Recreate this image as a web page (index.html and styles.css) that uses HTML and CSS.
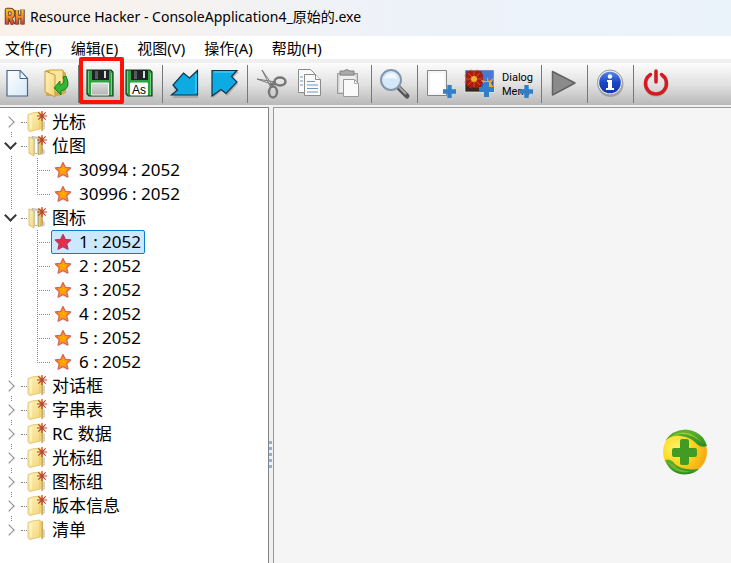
FILE: index.html
```html
<!DOCTYPE html>
<html lang="zh-CN">
<head>
<meta charset="utf-8">
<title>Resource Hacker</title>
<link rel="stylesheet" href="styles.css">
</head>
<body>
<svg class="defs" aria-hidden="true">
  <defs>
    <linearGradient id="gold" x1="0" x2="1" y2="1"><stop stop-color="#fff3b8"/><stop offset="1" stop-color="#f3d67e"/></linearGradient>
    <linearGradient id="goldDark" x1="0" x2="1"><stop stop-color="#f5dc83"/><stop offset="1" stop-color="#c9a04a"/></linearGradient>
    <linearGradient id="paper" x1="0" x2="1" y2="1"><stop stop-color="#fff"/><stop offset="1" stop-color="#d5e8f8"/></linearGradient>
    <linearGradient id="steel" x2="0" y2="1"><stop stop-color="#dedede"/><stop offset="1" stop-color="#b4b4b4"/></linearGradient>
    <linearGradient id="blue" x2="0" y2="1"><stop stop-color="#5b86ea"/><stop offset=".5" stop-color="#1747c4"/><stop offset="1" stop-color="#1238a5"/></linearGradient>
    <linearGradient id="rh" x2="0" y2="1"><stop stop-color="#ffbd22"/><stop offset=".5" stop-color="#f38a2b"/><stop offset="1" stop-color="#d73226"/></linearGradient>
    <linearGradient id="leaf" x2="0" y2="1"><stop stop-color="#64b52e"/><stop offset="1" stop-color="#2b8a20"/></linearGradient>
    <radialGradient id="ball" cx=".3" cy=".4" r=".7"><stop stop-color="#fff36a"/><stop offset=".5" stop-color="#ffd91f"/><stop offset="1" stop-color="#f6aa14"/></radialGradient>
    <radialGradient id="orange"><stop stop-color="#ffb000"/><stop offset="1" stop-color="#ff8a12"/></radialGradient>
    <symbol id="spark" viewBox="0 0 10 10"><path d="M5 0v10M0 5h10M1.3 1.3l7.4 7.4M8.7 1.3L1.3 8.7" stroke="#b8442f" stroke-width="1.200"/></symbol>
    <symbol id="folder" viewBox="0 0 20 22">
      <path d="M14 8l4 3v7l-4 3z" fill="#b7b7b0" opacity=".6"/>
      <path d="M1 3.500Q5 1.500 13 1v17L3 20.500Q1 20 1 18z" fill="url(#gold)" stroke="#dfbd63" stroke-width=".8"/>
      <path d="M13 1.500l3 1V20l-3-2z" fill="url(#goldDark)"/>
      <path d="M4 4.500v13" stroke="#fffbe0"/>
    </symbol>
    <symbol id="folder-open" viewBox="0 0 20 22">
      <path d="M14 12l4 3v4l-5 1z" fill="#bbb" opacity=".6"/>
      <path d="M5 1.500l7 1V19l-7-1z" fill="#ccd6d9" stroke="#9a9a84" stroke-width=".6"/>
      <path d="M2 2l5 2v17l-5-3z" fill="url(#gold)" stroke="#d6b052" stroke-width=".8"/>
      <path d="M11.500 2h4v16L11.500 20z" fill="url(#goldDark)" stroke="#b08d42" stroke-width=".5"/>
      <path d="M9 4v14" stroke="#f5fbff" stroke-width="2"/>
    </symbol>
    <symbol id="star" viewBox="0 0 18 18"><path d="M9 1.500l2.300 4.900 5.400.6-4 3.700 1.200 5.500L9 13.600l-4.900 2.600 1.200-5.500-4-3.700 5.400-.6z" fill="url(#orange)" stroke="#dc6658" stroke-width="1.300" stroke-linejoin="round"/></symbol>
    <symbol id="star-red" viewBox="0 0 18 18"><path d="M9 1.500l2.300 4.900 5.400.6-4 3.700 1.200 5.500L9 13.600l-4.900 2.600 1.200-5.500-4-3.700 5.400-.6z" fill="#e52c48" stroke="#b33d61" stroke-width="1.300" stroke-linejoin="round"/></symbol>
    <symbol id="plus" viewBox="0 0 12 12"><path d="M4 0h4v4h4v4H8v4H4V8H0V4h4z" fill="#2f80c8"/></symbol>
    <symbol id="disk" viewBox="0 0 34 34">
      <path d="M4 3h24l2 2v24H6l-2-2z" fill="#2fa344" stroke="#143f1d" stroke-width="1.200"/>
      <path d="M5.500 4v22M28.500 6v22" stroke="#6fd57a"/>
      <path d="M9 3h17v10H9z" fill="#1f2225"/>
      <path d="M12 4h3v8h-3z" fill="#555b60"/><path d="M21 4h2v7h-2z" fill="#d9dee2"/>
      <path d="M8.500 16h17v12h-17z" fill="url(#steel)" stroke="#f4f4f4"/>
    </symbol>
  </defs>
</svg>

<header class="titlebar">
  <svg class="app-icon" viewBox="0 0 22 20" aria-hidden="true">
    <g fill="none" stroke="#604535" stroke-width="4.500" stroke-linejoin="round"><path d="M3 17.500V3h3q3 0 3 3.500T6 10H3M6 10l3 7.500M13 3v14.500M18.500 2.500v15M13 10h5.500"/></g>
    <g fill="none" stroke="url(#rh)" stroke-width="2.500"><path d="M3 17.500V3h3q3 0 3 3.500T6 10H3M6 10l3 7.500M13 3v14.500M18.500 2.500v15M13 10h5.500"/></g>
  </svg>
  <h1 class="title">Resource Hacker - ConsoleApplication4_原始的.exe</h1>
</header>

<nav class="menubar">
  <button class="menu">文件(F)</button>
  <button class="menu">编辑(E)</button>
  <button class="menu">视图(V)</button>
  <button class="menu">操作(A)</button>
  <button class="menu">帮助(H)</button>
</nav>

<div class="toolbar" role="toolbar">
  <button class="tool" aria-label="New"><svg viewBox="0 0 34 34"><path d="M7 3.500h13l7.500 8V29H7z" fill="url(#paper)" stroke="#43688f" stroke-width="1.200"/><path d="M20 3.500v8h7.500z" fill="#eaf5ff" stroke="#43688f"/></svg></button>
  <button class="tool" aria-label="Open"><svg viewBox="0 0 34 34"><path d="M7 3h16l4 3v20l-7 3H7z" fill="#d3ac4a"/><path d="M10 3h14v22H10z" fill="#fae69a" stroke="#c8a146"/><path d="M6 4l10 4v22L6 25z" fill="url(#gold)" stroke="#c49b3f"/><path d="M27 9q6 13-5 15v4l-7-7 6-7v4q6-2 3-8z" fill="#36b533" stroke="#188123"/></svg></button>
  <span class="sep sep-tight"></span>
  <button class="tool" aria-label="Save"><svg viewBox="0 0 34 34"><use href="#disk"/></svg></button>
  <button class="tool" aria-label="Save As"><svg viewBox="0 0 34 34"><use href="#disk"/><path d="M8.500 16h17v12h-17z" fill="#fff"/><text class="as-label" x="10" y="27">As</text></svg></button>
  <span class="sep"></span>
  <button class="tool" aria-label="Import"><svg viewBox="0 0 34 34"><path d="M30 5v26H4l5-5-4-6L15 7l6 4z" fill="#888" opacity=".5"/><path d="M29.500 3.500V28H3.500l6-5L5 18 15.500 6l6 5z" fill="#0cabe3" stroke="#123244" stroke-width="1.200"/><path d="M28 7v19" stroke="#55d8ff"/></svg></button>
  <button class="tool" aria-label="Export"><svg viewBox="0 0 34 34"><path d="M6 5h26l-6 6 5 6-11 12-5-5-9 7z" fill="#888" opacity=".5"/><path d="M5 3.500h25l-5.500 6L30 15 19 26.500l-5-4L5 29z" fill="#0cabe3" stroke="#123244" stroke-width="1.200"/><path d="M7 5h20" stroke="#55d8ff"/></svg></button>
  <span class="sep"></span>
  <button class="tool" aria-label="Cut"><svg viewBox="0 0 34 34"><path d="M9 3l11 16-2 2zM4 12l18 3-1 3z" fill="#f5f5f5" stroke="#777"/><ellipse cx="27" cy="14.500" rx="5.500" ry="4" fill="none" stroke="#777" stroke-width="2.500"/><ellipse cx="20" cy="25" rx="4" ry="5.500" fill="none" stroke="#777" stroke-width="2.500"/><path d="M17 18l5-2" stroke="#777" stroke-width="3"/></svg></button>
  <button class="tool" aria-label="Copy"><svg viewBox="0 0 34 34"><g fill="#fafafa" stroke="#8b8b8b"><path d="M6.500 2.500h12l5 5v18h-17z"/><path d="M12.500 7.500h11l5 5v16h-16z"/><path d="M23.500 7.500v5h5"/></g><path d="M8 10h3M8 14h3M8 18h3M15 14.500h8M15 18h11M15 21.500h11M15 25h11" stroke="#7296b8"/></svg></button>
  <button class="tool" aria-label="Paste"><svg viewBox="0 0 34 34"><path d="M6.500 6.500h20v20h-20z" fill="#d3d3d3" stroke="#999"/><path d="M8.500 9h16v16h-16z" fill="#eee"/><path d="M9 7V4h4q2-3 6 0h4v4H9z" fill="#aaa" stroke="#828282"/><path d="M12.500 12.500h11l4 4v13h-15z" fill="#fafafa" stroke="#999"/><path d="M23.500 12.500v4h4" fill="none" stroke="#aaa"/></svg></button>
  <span class="sep"></span>
  <button class="tool" aria-label="Find"><svg viewBox="0 0 34 34"><path d="M22 21l8 8" stroke="#555" stroke-width="5" stroke-linecap="round"/><path d="M21 19l8 8" stroke="#aaa" stroke-width="2"/><circle cx="14" cy="13" r="10" fill="#d4e8fa" stroke="#8496ad" stroke-width="2"/><path d="M7 12q2-6 9-6 5 3 4 6-7-2-13 0z" fill="#fff" opacity=".7"/></svg></button>
  <span class="sep"></span>
  <button class="tool" aria-label="Add resource"><svg viewBox="0 0 34 34"><path d="M4.500 3.500h19v25h-19z" fill="#f5f5f5" stroke="#858585"/><path d="M7 6h14v19L7 27z" fill="#fff"/><use href="#plus" x="20" y="18" width="13" height="13"/></svg></button>
  <button class="tool" aria-label="Add image"><svg viewBox="0 0 34 34"><path d="M3 3h29v22H3z" fill="#2a5fbf"/><path d="M3 14h16v11H3z" fill="#38271c"/><path d="M20 4h11v9H20z" fill="#4779d5"/><g fill="none"><path d="M12 3v18M3 12h18M5 5l14 14M19 5L5 19M8 3l8 18M16 3L8 21M3 8l18 8M21 8L3 16" stroke="#a51e10" stroke-width="3"/><path d="M12 4v16M4 12h16M6 6l12 12M18 6L6 18" stroke="#e44a20"/></g><circle cx="12" cy="12" r="3" fill="#eab32a"/><path d="M25 10l2 4 5-3-3 5 3 5-6-1-5 3 1-6-3-4 6 1z" fill="#f5a719"/><path d="M3 3h29v22H3z" fill="none" stroke="#eee" stroke-width=".7"/><use href="#plus" x="17" y="15" width="15" height="15"/></svg></button>
  <button class="tool" aria-label="Dialog and menu"><svg viewBox="0 0 34 34"><text class="dialog-label" x="1" y="14">Dialog</text><text class="dialog-label" x="1" y="28">Menu</text><use href="#plus" x="19" y="18" width="13" height="13"/></svg></button>
  <span class="sep"></span>
  <button class="tool" aria-label="Compile"><svg viewBox="0 0 34 34"><path d="M5.500 4.500L28 16 5.500 28z" fill="#8b8b8b" stroke="#636363" stroke-width="1.500" stroke-linejoin="round"/></svg></button>
  <span class="sep"></span>
  <button class="tool" aria-label="About"><svg viewBox="0 0 34 34"><circle cx="17.500" cy="17" r="13" fill="#777" opacity=".5"/><circle cx="17" cy="15.500" r="12.500" fill="#eee" stroke="#999"/><circle cx="17" cy="15.500" r="10.800" fill="url(#blue)"/><circle cx="17" cy="9.500" r="2.200" fill="#fff"/><path d="M14 13h5v8h2v2h-8v-2h2v-6h-1z" fill="#fff"/></svg></button>
  <span class="sep"></span>
  <button class="tool" aria-label="Exit"><svg viewBox="0 0 34 34"><path d="M11.500 8.500a10.500 10.500 0 1 0 11 0M17 5v11" fill="none" stroke="#888" stroke-width="3.500" opacity=".4"/><path d="M11.500 7.500a10.500 10.500 0 1 0 11 0M17 4v11" fill="none" stroke="#d51a20" stroke-width="3.500" stroke-linecap="round"/></svg></button>
  <span class="highlight"></span>
</div>

<main class="workspace">
  <ul class="tree">
    <li class="node"><div class="row"><button class="toggle" aria-label="Expand"></button><span class="dots"></span><svg class="folder"><use href="#folder"/><use href="#spark" x="10" width="10" height="10"/></svg><span class="label">光标</span></div></li>
    <li class="node"><div class="row"><button class="toggle open" aria-label="Collapse"></button><span class="dots"></span><svg class="folder"><use href="#folder-open"/><use href="#spark" x="10" width="10" height="10"/></svg><span class="label">位图</span></div>
      <ul class="children">
        <li class="leaf"><span class="item"><svg class="star"><use href="#star"/></svg>30994 : 2052</span></li>
        <li class="leaf"><span class="item"><svg class="star"><use href="#star"/></svg>30996 : 2052</span></li>
      </ul>
    </li>
    <li class="node"><div class="row"><button class="toggle open" aria-label="Collapse"></button><span class="dots"></span><svg class="folder"><use href="#folder-open"/><use href="#spark" x="10" width="10" height="10"/></svg><span class="label">图标</span></div>
      <ul class="children">
        <li class="leaf"><span class="item selected"><svg class="star"><use href="#star-red"/></svg>1 : 2052</span></li>
        <li class="leaf"><span class="item"><svg class="star"><use href="#star"/></svg>2 : 2052</span></li>
        <li class="leaf"><span class="item"><svg class="star"><use href="#star"/></svg>3 : 2052</span></li>
        <li class="leaf"><span class="item"><svg class="star"><use href="#star"/></svg>4 : 2052</span></li>
        <li class="leaf"><span class="item"><svg class="star"><use href="#star"/></svg>5 : 2052</span></li>
        <li class="leaf"><span class="item"><svg class="star"><use href="#star"/></svg>6 : 2052</span></li>
      </ul>
    </li>
    <li class="node"><div class="row"><button class="toggle" aria-label="Expand"></button><span class="dots"></span><svg class="folder"><use href="#folder"/><use href="#spark" x="10" width="10" height="10"/></svg><span class="label">对话框</span></div></li>
    <li class="node"><div class="row"><button class="toggle" aria-label="Expand"></button><span class="dots"></span><svg class="folder"><use href="#folder"/><use href="#spark" x="10" width="10" height="10"/></svg><span class="label">字串表</span></div></li>
    <li class="node"><div class="row"><button class="toggle" aria-label="Expand"></button><span class="dots"></span><svg class="folder"><use href="#folder"/><use href="#spark" x="10" width="10" height="10"/></svg><span class="label">RC 数据</span></div></li>
    <li class="node"><div class="row"><button class="toggle" aria-label="Expand"></button><span class="dots"></span><svg class="folder"><use href="#folder"/><use href="#spark" x="10" width="10" height="10"/></svg><span class="label">光标组</span></div></li>
    <li class="node"><div class="row"><button class="toggle" aria-label="Expand"></button><span class="dots"></span><svg class="folder"><use href="#folder"/><use href="#spark" x="10" width="10" height="10"/></svg><span class="label">图标组</span></div></li>
    <li class="node"><div class="row"><button class="toggle" aria-label="Expand"></button><span class="dots"></span><svg class="folder"><use href="#folder"/><use href="#spark" x="10" width="10" height="10"/></svg><span class="label">版本信息</span></div></li>
    <li class="node"><div class="row"><button class="toggle" aria-label="Expand"></button><span class="dots"></span><svg class="folder"><use href="#folder"/></svg><span class="label">清单</span></div></li>
  </ul>
  <div class="splitter"><i></i><i></i><i></i><i></i><i></i></div>
  <section class="viewer">
    <svg class="ball" viewBox="0 0 46 46" aria-hidden="true">
      <circle cx="23" cy="23" r="22" fill="url(#ball)"/>
      <path d="M3 12Q10 1 23 .5 41 2 45 17q-5 2-9-1-7-8-17-9Q11 5 3 12z" fill="url(#leaf)"/>
      <path d="M9 7q10-6 20-2 6 3 11 9Q27 1 9 7z" fill="#98cf38"/>
      <path d="M3 31q6-2 10 4 7 7 24 5-5 5-14 5.500Q8 45 3 31z" fill="url(#leaf)"/>
      <path d="M6 34q5 0 9 5 7 4 15 3Q15 47 6 34z" fill="#67b62f"/>
      <path d="M18 12q0-2 2-2h5q2 0 2 2v7h6q2 0 2 2v5q0 2-2 2h-6v6q0 2-2 2h-5q-2 0-2-2v-6h-6q-2 0-2-2v-5q0-2 2-2h6z" fill="#419b25"/>
    </svg>
  </section>
</main>
</body>
</html>
```
FILE: styles.css
```css
* { box-sizing: border-box; }

body {
  margin: 0;
  min-height: 100vh;
  display: flex;
  flex-direction: column;
  background: #f0f0f0;
  color: #000;
  font-family: "Noto Sans", "Noto Sans CJK SC", sans-serif;
}

button {
  padding: 0;
  border: 0;
  background: none;
  color: inherit;
  font: inherit;
}

ul { margin: 0; padding: 0; list-style: none; }

svg { display: block; flex: none; }

.defs { position: absolute; width: 0; height: 0; }

.titlebar {
  display: flex;
  align-items: center;
  gap: 4px;
  height: 36px;
  padding: 0 4px 2px;
  background: linear-gradient(90deg, #faf1e9, #f5f2f0 25%, #edf2f9 55%, #ebf3fa);
}

.app-icon { width: 22px; height: 20px; }

.title {
  margin: 0;
  font-size: 14px;
  font-weight: 400;
  line-height: 20px;
  white-space: nowrap;
}

.menubar {
  display: flex;
  gap: 19px;
  height: 23px;
  padding: 0 5px;
  background: #fff;
}

.menu {
  font-size: 15px;
  line-height: 24px;
  white-space: nowrap;
}

.toolbar {
  position: relative;
  display: flex;
  align-items: center;
  gap: 5px;
  height: 42px;
  margin: 4px 0 2px;
  background: linear-gradient(#fcfcfc, #e2e2e2 50%, #b9b9b9);
}

.tool { flex: none; width: 34px; height: 34px; }

.tool svg { width: 34px; height: 34px; }

.sep {
  width: 1px;
  height: 38px;
  margin-left: 1px;
  background: #777;
}

.sep-tight { margin: 0 -1px 0 0; }

.highlight {
  position: absolute;
  top: -6px;
  left: 79px;
  width: 45px;
  height: 47px;
  border: 4px solid #ff1205;
  border-radius: 2px;
}

.as-label { font: 12px "Liberation Sans", sans-serif; }

.dialog-label { font: 11px Roboto, "Liberation Sans", sans-serif; }

.workspace { display: flex; flex: 1; }

.tree {
  flex: none;
  width: 269px;
  padding-top: 2px;
  border: solid #828282;
  border-width: 1px 1px 0 0;
  background: #fff;
  font-size: 17px;
  line-height: 24px;
}

.node { background: linear-gradient(#888 50%, transparent 50%) 11px 0 / 1px 2px repeat-y; }

.node:first-child {
  background:
    linear-gradient(#fff, #fff) 0 0 / 20px 12px no-repeat,
    linear-gradient(#888 50%, transparent 50%) 11px 0 / 1px 2px repeat-y;
}

.node:last-child {
  background:
    linear-gradient(#fff, #fff) 0 12px / 20px 12px no-repeat,
    linear-gradient(#888 50%, transparent 50%) 11px 0 / 1px 2px repeat-y;
}

.row { display: flex; align-items: center; height: 24px; }

.toggle {
  display: flex;
  align-items: center;
  justify-content: center;
  width: 16px;
  height: 18px;
  margin-left: 3px;
  padding-right: 4px;
  background: #fff;
}

.toggle::before {
  content: "";
  width: 7px;
  height: 7px;
  border: solid #8a8a8a;
  border-width: 1px 1px 0 0;
  outline: 0;
  transform: rotate(45deg);
}

.toggle.open { padding: 0 1px 5px 0; }

.toggle.open::before {
  border-color: #333;
  border-width: 2px 2px 0 0;
  transform: rotate(135deg);
}

.dots { width: 6px; margin: 0 0 0 2px; border-top: 1px dotted #888; }

.folder { width: 20px; height: 22px; }

.label { margin-left: 5px; }

.leaf {
  display: flex;
  height: 24px;
  margin-left: 37px;
  background:
    linear-gradient(90deg, #888 50%, transparent 50%) 0 12px / 2px 1px repeat-x,
    linear-gradient(#888 50%, transparent 50%) 0 0 / 1px 2px repeat-y;
}

.leaf:last-child {
  background:
    linear-gradient(#fff, #fff) 0 13px / 2px 12px no-repeat,
    linear-gradient(90deg, #888 50%, transparent 50%) 0 12px / 2px 1px repeat-x,
    linear-gradient(#888 50%, transparent 50%) 0 0 / 1px 2px repeat-y;
}

.leaf::after { content: ""; flex: 1; background: #fff; }

.item {
  display: flex;
  align-items: center;
  gap: 7px;
  margin-left: 14px;
  padding: 0 3px 0 2px;
  border: 1px solid #fff;
  background: #fff;
  line-height: 22px;
  white-space: nowrap;
}

.item.selected {
  border-color: #0f7bd5;
  border-radius: 2px;
  background: #cce8ff;
}

.star { width: 18px; height: 18px; }

.splitter {
  display: flex;
  flex: none;
  flex-direction: column;
  align-items: flex-start;
  justify-content: center;
  gap: 3px;
  width: 4px;
  padding-top: 238px;
}

.splitter i { width: 3px; height: 3px; background: #92b0d3; }

.viewer {
  position: relative;
  flex: 1;
  border: solid #999;
  border-width: 1px 0 0 1px;
  background: #f5f5f5;
}

.ball {
  position: absolute;
  top: 321px;
  right: 23px;
  width: 46px;
  height: 46px;
}
```
